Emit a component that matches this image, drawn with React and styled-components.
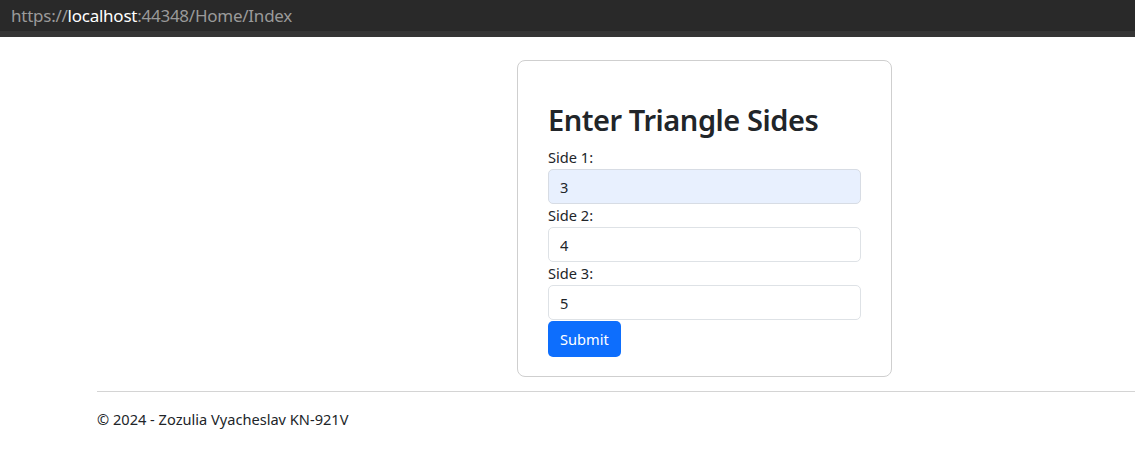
import React from "react";
import styled, { createGlobalStyle } from "styled-components";

const GlobalStyle = createGlobalStyle`
  html, body {
    margin: 0;
    padding: 0;
    background: #ffffff;
  }
  body {
    font-family: "Noto Sans", "Open Sans", sans-serif;
    color: #212529;
  }
  * {
    box-sizing: border-box;
  }
`;

const AddressBar = styled.div`
  height: 31px;
  background: #292929;
  border-bottom: 6px solid #353535;
  box-sizing: content-box;
  display: flex;
  align-items: center;
  padding-left: 11px;
  font-size: 17px;
  color: #9a9a9a;
  letter-spacing: -0.25px;
`;

const Host = styled.span`
  color: #ffffff;
`;

const Main = styled.main`
  display: flex;
  padding: 23px 0 14px 517px;
`;

const Card = styled.form`
  width: 375px;
  border: 1px solid #cfcfcf;
  border-radius: 8px;
  padding: 40px 30px 19px;
  display: flex;
  flex-direction: column;
  align-items: flex-start;
`;

const Title = styled.h2`
  margin: 0 0 7px;
  font-size: 29px;
  font-weight: 600;
  line-height: 38px;
  letter-spacing: -0.45px;
`;

const Label = styled.label`
  font-size: 14.6px;
  line-height: 23px;
`;

const Input = styled.input`
  width: 100%;
  height: 35px;
  padding: 0 11px;
  font-family: inherit;
  font-size: 14.6px;
  color: #212529;
  background: ${(p) => (p.$filled ? "#e8f0fe" : "#ffffff")};
  border: 1px solid ${(p) => (p.$filled ? "#d7dce4" : "#dee2e6")};
  border-radius: 5px;
  outline: none;
`;

const Button = styled.button`
  margin-top: 1px;
  height: 36px;
  padding: 0 12px;
  font-family: inherit;
  font-size: 14.6px;
  color: #ffffff;
  background: #0d6efd;
  border: none;
  border-radius: 5px;
`;

const Footer = styled.footer`
  margin-left: 97px;
  border-top: 1px solid #d4d4d4;
  padding-top: 16px;
  font-size: 14.6px;
  line-height: 22px;
`;

const sides = [
  { id: "side1", label: "Side 1:", value: "3", filled: true },
  { id: "side2", label: "Side 2:", value: "4" },
  { id: "side3", label: "Side 3:", value: "5" },
];

const App = () => {
  return (
    <>
      <GlobalStyle />
      <AddressBar>
        https://<Host>localhost</Host>:44348/Home/Index
      </AddressBar>
      <Main>
        <Card onSubmit={(e) => e.preventDefault()}>
          <Title>Enter Triangle Sides</Title>
          {sides.map((s) => (
            <React.Fragment key={s.id}>
              <Label htmlFor={s.id}>{s.label}</Label>
              <Input id={s.id} defaultValue={s.value} $filled={s.filled} />
            </React.Fragment>
          ))}
          <Button type="submit">Submit</Button>
        </Card>
      </Main>
      <Footer>© 2024 - Zozulia Vyacheslav KN-921V</Footer>
    </>
  );
};

export default App;
